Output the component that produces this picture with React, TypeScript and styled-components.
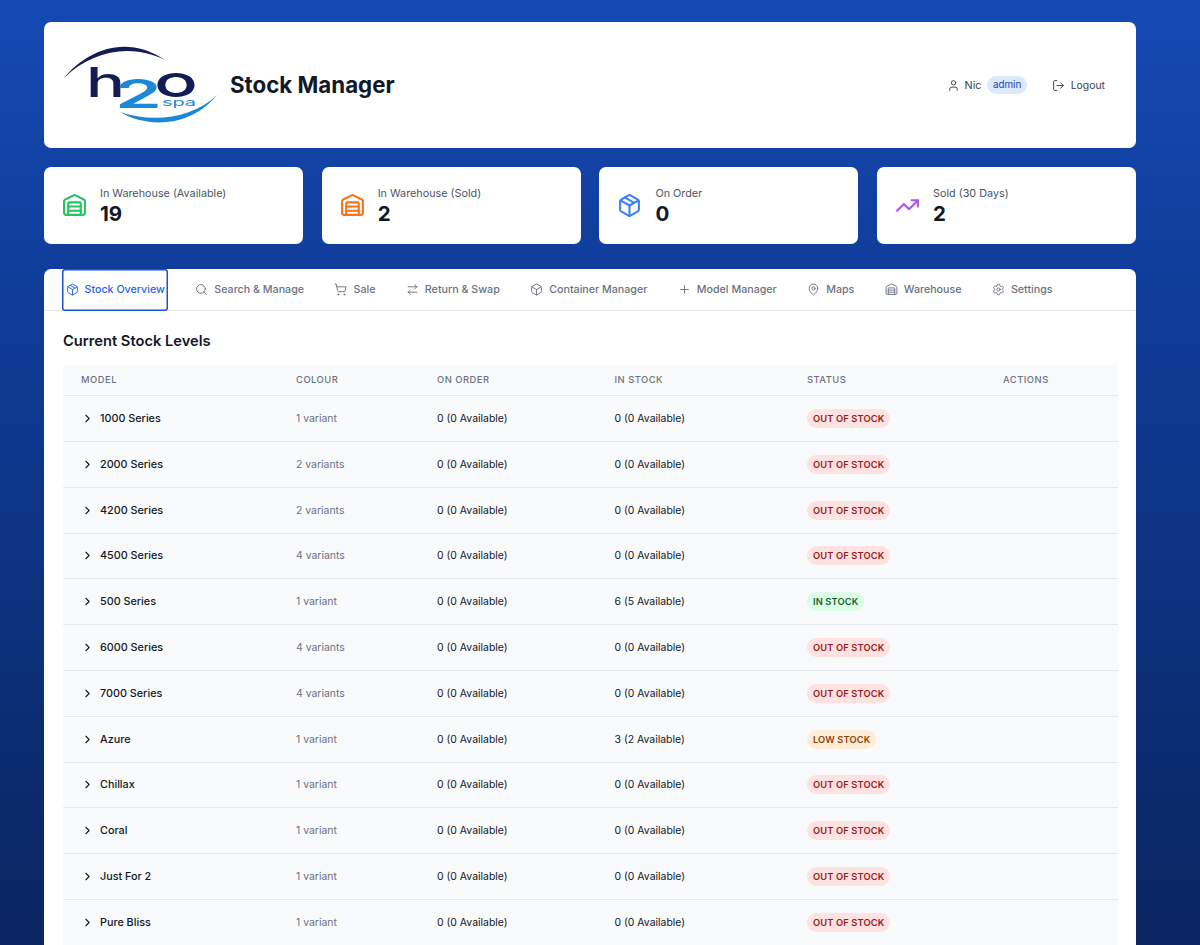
import React from "react";
import styled, { createGlobalStyle } from "styled-components";
import {
  Box,
  ChevronRight,
  LogOut,
  MapPin,
  Package,
  Plus,
  ArrowRightLeft,
  Search,
  Settings,
  ShoppingCart,
  TrendingUp,
  User,
  Warehouse,
} from "lucide-react";

const Global = createGlobalStyle`
  html, body { margin: 0; padding: 0; height: 100%; overflow: hidden; }
  body { font-family: Inter, "Liberation Sans", sans-serif; -webkit-font-smoothing: antialiased; }
`;

const Page = styled.div`
  height: 945px;
  overflow: hidden;
  box-sizing: border-box;
  padding: 22px 64px 0 44px;
  display: flex;
  flex-direction: column;
  background: linear-gradient(180deg, #1549b3 0%, #0f3d9a 30%, #0a2560 100%);
`;

const Header = styled.header`
  height: 126px;
  flex: none;
  box-sizing: border-box;
  padding: 0 31px 0 18px;
  background: #fff;
  border-radius: 7px;
  display: flex;
  align-items: center;
  justify-content: space-between;
`;

const Brand = styled.div`
  display: flex;
  align-items: center;
  gap: 8px;
`;

const Title = styled.h1`
  margin: 0;
  font-size: 22.3px;
  line-height: 30px;
  font-weight: 700;
  color: #111827;
`;

const UserBar = styled.div`
  display: flex;
  align-items: center;
  font-size: 10.8px;
  color: #374151;
`;

const UserName = styled.span`
  margin: 0 6px 0 5px;
`;

const RoleBadge = styled.span`
  background: #dbeafe;
  color: #1e40af;
  font-size: 9.8px;
  line-height: 18px;
  padding: 0 5.5px;
  border-radius: 9px;
  margin-right: 25px;
`;

const LogoutLink = styled.span`
  display: flex;
  align-items: center;
  gap: 6px;
  font-size: 10.4px;
`;

const Stats = styled.section`
  display: grid;
  grid-template-columns: repeat(4, 1fr);
  gap: 18.8px;
  margin-top: 19px;
  flex: none;
`;

const StatCard = styled.div`
  height: 77px;
  box-sizing: border-box;
  padding: 0 18px;
  background: #fff;
  border-radius: 7px;
  display: flex;
  align-items: center;
  gap: 13px;
`;

const StatText = styled.div`
  display: flex;
  flex-direction: column;
  padding-top: 2px;
`;

const StatLabel = styled.span`
  font-size: 10.8px;
  line-height: 15px;
  color: #4b5563;
`;

const StatValue = styled.span`
  font-size: 20.5px;
  line-height: 26px;
  font-weight: 700;
  color: #111827;
`;

const Panel = styled.main`
  margin-top: 25px;
  background: #fff;
  border-radius: 7px 7px 0 0;
  flex: 1;
  min-height: 0;
  overflow: hidden;
`;

const TabBar = styled.nav`
  height: 42px;
  box-sizing: border-box;
  padding-left: 18px;
  border-bottom: 1px solid #e5e7eb;
  display: flex;
  gap: 23.4px;
`;

const Tab = styled.div<{ $active?: boolean }>`
  height: 42px;
  box-sizing: border-box;
  padding: 0 3.5px 1.5px;
  display: flex;
  align-items: center;
  gap: 6px;
  font-size: 10.7px;
  font-weight: 500;
  color: ${(p) => (p.$active ? "#2563eb" : "#6b7280")};
  box-shadow: ${(p) => (p.$active ? "inset 0 0 0 1.5px #1d4ed8" : "none")};
  border-radius: 3px;
`;

const Content = styled.div`
  padding: 19.7px 18px 0 19px;
`;

const SectionTitle = styled.h2`
  margin: 0 0 13px;
  font-size: 14.7px;
  line-height: 21px;
  font-weight: 600;
  color: #111827;
`;

const Table = styled.table`
  width: 100%;
  table-layout: fixed;
  border-collapse: collapse;
`;

const Col = styled.col<{ $w: number }>`
  width: ${(p) => p.$w}px;
`;

const HeadCell = styled.th`
  height: 31px;
  box-sizing: border-box;
  padding: 0 0 1px 18px;
  background: #f9fafb;
  border-bottom: 1px solid #e5e7eb;
  font-size: 9.4px;
  font-weight: 500;
  letter-spacing: 0.5px;
  text-transform: uppercase;
  text-align: left;
  color: #6b7280;
`;

const Row = styled.tr`
  background: #f9fafb;
`;

const Cell = styled.td<{ $muted?: boolean }>`
  height: 45.8px;
  box-sizing: border-box;
  padding: 0 0 0 18px;
  border-bottom: 1px solid #e5e7eb;
  font-size: 10.45px;
  color: ${(p) => (p.$muted ? "#6b7280" : "#111827")};
`;

const ModelName = styled.span`
  display: flex;
  align-items: center;
  gap: 6px;
  font-size: 10.8px;
  font-weight: 500;
  color: #111827;
`;

type Level = "out" | "in" | "low";

const badgeColors: Record<Level, [string, string]> = {
  out: ["#fee2e2", "#991b1b"],
  in: ["#dcfce7", "#166534"],
  low: ["#ffedd5", "#92400e"],
};

const StatusBadge = styled.span<{ $level: Level }>`
  display: inline-block;
  padding: 0 6px;
  border-radius: 10px;
  line-height: 19px;
  font-size: 9.3px;
  font-weight: 600;
  letter-spacing: 0.12px;
  text-transform: uppercase;
  background: ${(p) => badgeColors[p.$level][0]};
  color: ${(p) => badgeColors[p.$level][1]};
`;

const LogoText = styled.text<{ $fill: string; $weight: number }>`
  font-family: Inter, sans-serif;
  fill: ${(p) => p.$fill};
  font-weight: ${(p) => p.$weight};
`;

const Logo = () => (
  <svg width="160" height="90" viewBox="0 0 160 90" aria-label="h2o spa">
    <path d="M2 38C22 13 62-8 103 20 68 3 30 11 2 38Z" fill="#141c56" />
    <path d="M58 72C85 88 128 88 155 55 130 79 90 83 58 72Z" fill="#1e88d8" />
    <LogoText x="24" y="57" fontSize="41" textLength="39" lengthAdjust="spacingAndGlyphs" $fill="#141c56" $weight={500}>h</LogoText>
    <LogoText x="53" y="68" fontSize="40" textLength="47" lengthAdjust="spacingAndGlyphs" $fill="#1e88d8" $weight={600}>2</LogoText>
    <LogoText x="92" y="57" fontSize="44" textLength="44" lengthAdjust="spacingAndGlyphs" $fill="#141c56" $weight={500}>o</LogoText>
    <LogoText x="100" y="66" fontSize="10" textLength="34" lengthAdjust="spacingAndGlyphs" $fill="#1e88d8" $weight={400}>spa</LogoText>
  </svg>
);

const stats = [
  { label: "In Warehouse (Available)", value: "19", Icon: Warehouse, color: "#22c55e" },
  { label: "In Warehouse (Sold)", value: "2", Icon: Warehouse, color: "#f97316" },
  { label: "On Order", value: "0", Icon: Package, color: "#3b82f6" },
  { label: "Sold (30 Days)", value: "2", Icon: TrendingUp, color: "#a855f7" },
];

const tabs = [
  { label: "Stock Overview", Icon: Package },
  { label: "Search & Manage", Icon: Search },
  { label: "Sale", Icon: ShoppingCart },
  { label: "Return & Swap", Icon: ArrowRightLeft },
  { label: "Container Manager", Icon: Box },
  { label: "Model Manager", Icon: Plus },
  { label: "Maps", Icon: MapPin },
  { label: "Warehouse", Icon: Warehouse },
  { label: "Settings", Icon: Settings },
];

const colWidths = [215, 141, 177.5, 192.5, 196, 133];
const headers = ["Model", "Colour", "On Order", "In Stock", "Status", "Actions"];

const rows: { model: string; variants: string; stock: string; level: Level; status: string }[] = [
  { model: "1000 Series", variants: "1 variant", stock: "0 (0 Available)", level: "out", status: "Out of Stock" },
  { model: "2000 Series", variants: "2 variants", stock: "0 (0 Available)", level: "out", status: "Out of Stock" },
  { model: "4200 Series", variants: "2 variants", stock: "0 (0 Available)", level: "out", status: "Out of Stock" },
  { model: "4500 Series", variants: "4 variants", stock: "0 (0 Available)", level: "out", status: "Out of Stock" },
  { model: "500 Series", variants: "1 variant", stock: "6 (5 Available)", level: "in", status: "In Stock" },
  { model: "6000 Series", variants: "4 variants", stock: "0 (0 Available)", level: "out", status: "Out of Stock" },
  { model: "7000 Series", variants: "4 variants", stock: "0 (0 Available)", level: "out", status: "Out of Stock" },
  { model: "Azure", variants: "1 variant", stock: "3 (2 Available)", level: "low", status: "Low Stock" },
  { model: "Chillax", variants: "1 variant", stock: "0 (0 Available)", level: "out", status: "Out of Stock" },
  { model: "Coral", variants: "1 variant", stock: "0 (0 Available)", level: "out", status: "Out of Stock" },
  { model: "Just For 2", variants: "1 variant", stock: "0 (0 Available)", level: "out", status: "Out of Stock" },
  { model: "Pure Bliss", variants: "1 variant", stock: "0 (0 Available)", level: "out", status: "Out of Stock" },
];

export default function App() {
  return (
    <>
      <Global />
      <Page>
        <Header>
          <Brand>
            <Logo />
            <Title>Stock Manager</Title>
          </Brand>
          <UserBar>
            <User size={13} strokeWidth={1.75} />
            <UserName>Nic</UserName>
            <RoleBadge>admin</RoleBadge>
            <LogoutLink>
              <LogOut size={13} strokeWidth={1.75} />
              Logout
            </LogoutLink>
          </UserBar>
        </Header>
        <Stats>
          {stats.map(({ label, value, Icon, color }) => (
            <StatCard key={label}>
              <Icon size={25} color={color} strokeWidth={2} />
              <StatText>
                <StatLabel>{label}</StatLabel>
                <StatValue>{value}</StatValue>
              </StatText>
            </StatCard>
          ))}
        </Stats>
        <Panel>
          <TabBar>
            {tabs.map(({ label, Icon }, i) => (
              <Tab key={label} $active={i === 0}>
                <Icon size={13} strokeWidth={1.75} />
                {label}
              </Tab>
            ))}
          </TabBar>
          <Content>
            <SectionTitle>Current Stock Levels</SectionTitle>
            <Table>
              <colgroup>
                {colWidths.map((w, i) => (
                  <Col key={i} $w={w} />
                ))}
              </colgroup>
              <thead>
                <tr>
                  {headers.map((h) => (
                    <HeadCell key={h}>{h}</HeadCell>
                  ))}
                </tr>
              </thead>
              <tbody>
                {rows.map((r) => (
                  <Row key={r.model}>
                    <Cell>
                      <ModelName>
                        <ChevronRight size={13} strokeWidth={2} />
                        {r.model}
                      </ModelName>
                    </Cell>
                    <Cell $muted>{r.variants}</Cell>
                    <Cell>0 (0 Available)</Cell>
                    <Cell>{r.stock}</Cell>
                    <Cell>
                      <StatusBadge $level={r.level}>{r.status}</StatusBadge>
                    </Cell>
                    <Cell />
                  </Row>
                ))}
              </tbody>
            </Table>
          </Content>
        </Panel>
      </Page>
    </>
  );
}
